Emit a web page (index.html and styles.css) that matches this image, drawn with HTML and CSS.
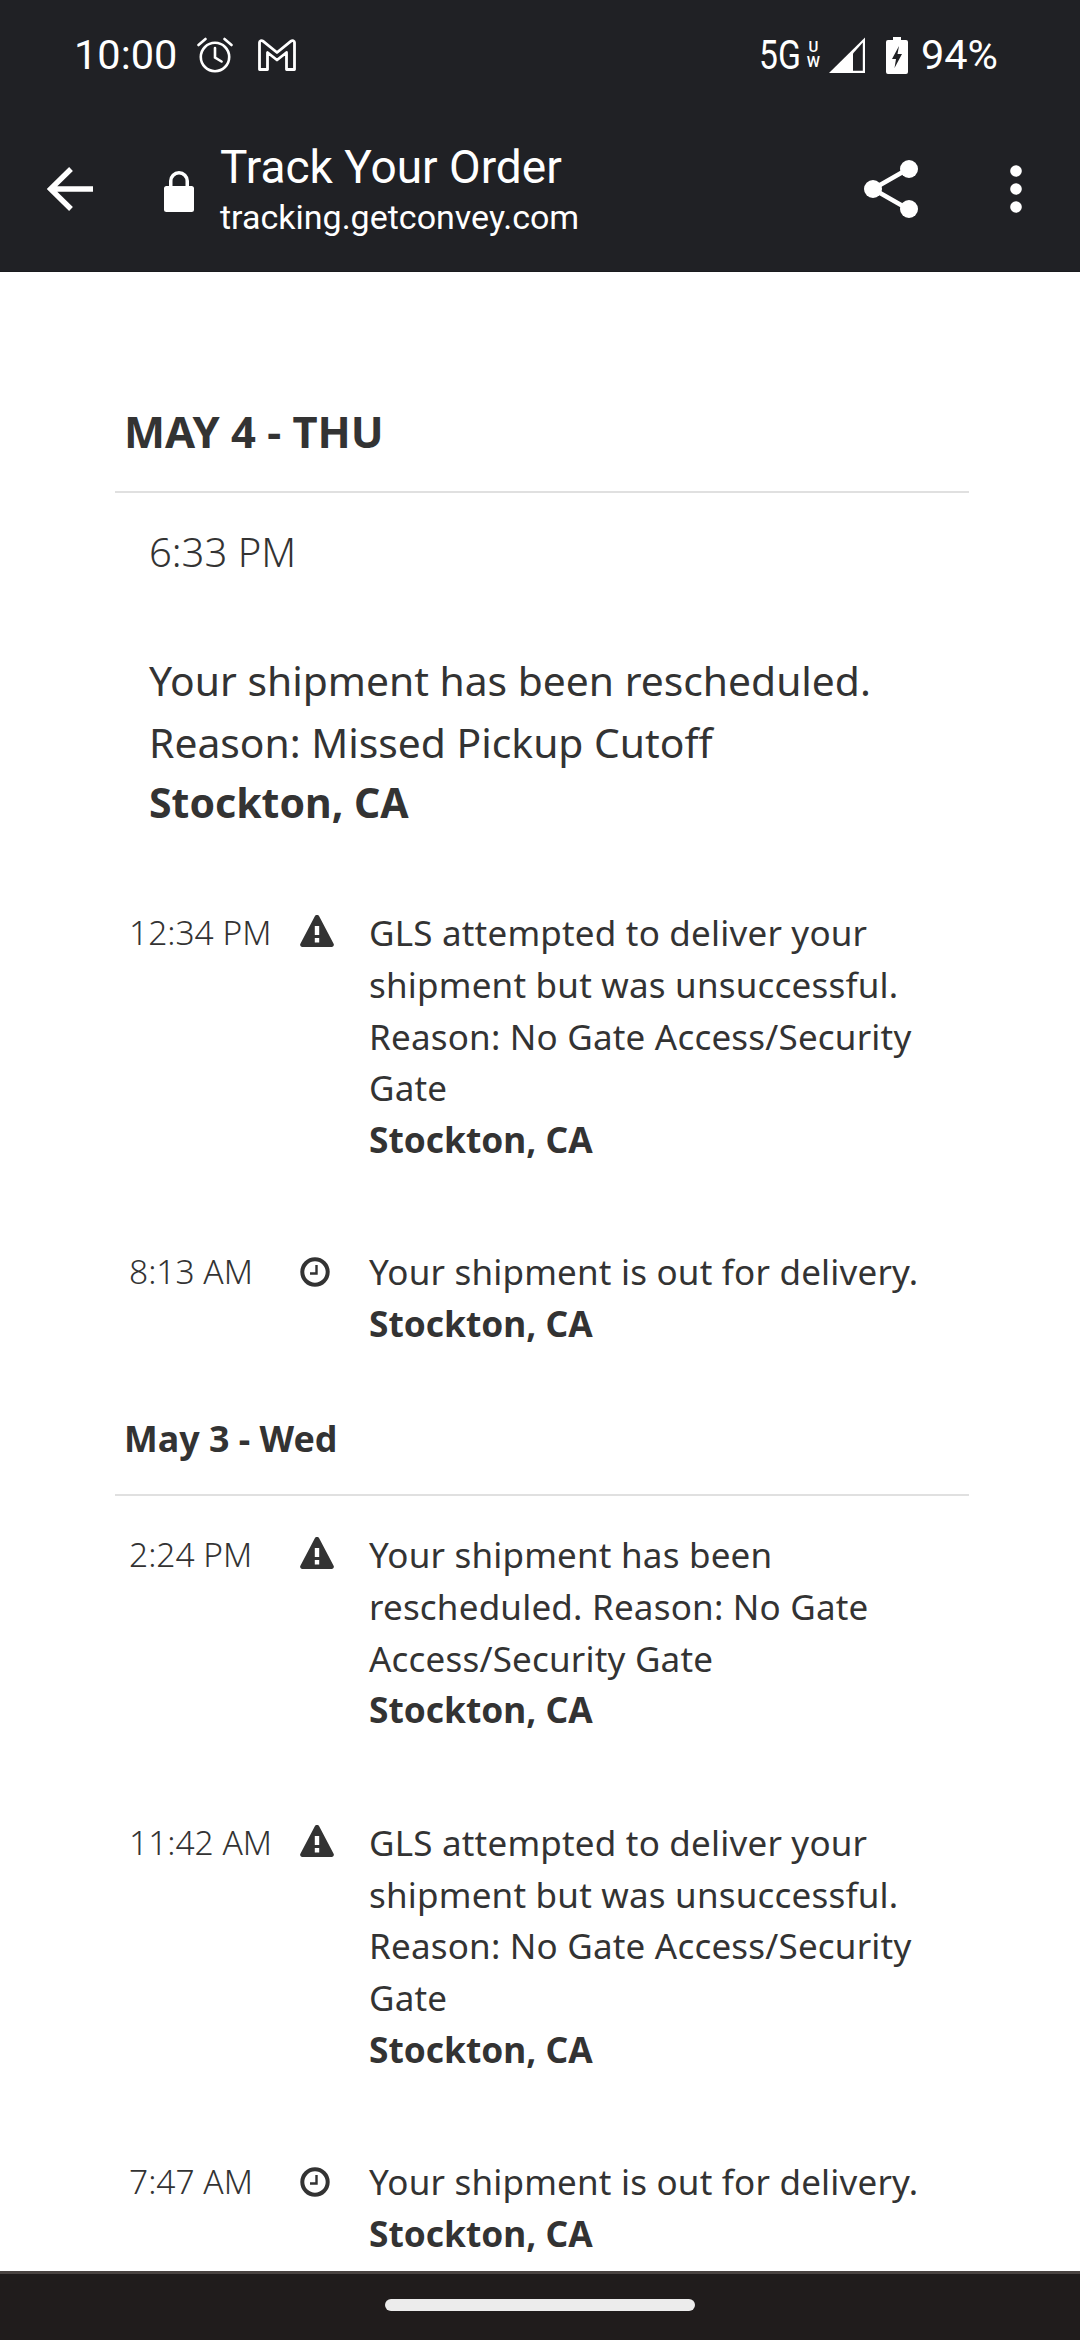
FILE: index.html
```html
<!DOCTYPE html>
<html lang="en">
<head>
<meta charset="utf-8">
<title>Track Your Order</title>
<link rel="stylesheet" href="styles.css">
</head>
<body>
<div class="phone">
  <header class="chrome">
    <div class="status">
      <div class="status-left">
        <span class="clock">10:00</span>
        <svg class="ic-alarm" viewBox="0 0 36 36" fill="none" stroke="#fff" stroke-width="2.6"><circle cx="18" cy="20" r="14.2"/><path d="M18 11v9.5l6.5 4M1.5 8 8.5 2M34.5 8l-7-6" stroke-linecap="round"/></svg>
        <svg class="ic-gmail" viewBox="0 0 38 32" fill="none" stroke="#fff" stroke-width="2.8" stroke-linejoin="round"><path d="M1.5 3.5C1.500 1.800 3.500 1 5 2.200L19 13.500 33 2.200C34.500 1 36.500 1.800 36.500 3.500V30.500H28.500V13.500L19 21 9.500 13.500V30.500H1.500Z"/></svg>
      </div>
      <div class="status-right">
        <span class="net">5G</span>
        <span class="uw"><span>U</span><span>W</span></span>
        <svg class="ic-signal" viewBox="0 0 37 36"><path d="M36 0.500V36H0Z" fill="#fff"/><path d="M24 16.500V33.800H33.800V5.500Z" fill="#202125"/></svg>
        <svg class="ic-batt" viewBox="0 0 22 37"><path d="M7 0h8v3h5a2 2 0 0 1 2 2v30a2 2 0 0 1-2 2H2a2 2 0 0 1-2-2V5a2 2 0 0 1 2-2h5Z" fill="#fff"/><path d="M13 9 6 22h4l-1.500 9L16 17h-4.500Z" fill="#202125"/></svg>
        <span class="pct">94%</span>
      </div>
    </div>
    <div class="toolbar">
      <svg class="ic-back" viewBox="0 0 46 46" fill="none" stroke="#fff" stroke-width="5.400"><path d="M46 23H4M24 3 3.500 23 24 43"/></svg>
      <svg class="ic-lock" viewBox="0 0 30 41"><path d="M15 0a10 10 0 0 1 10 10v5h2.500a2.500 2.500 0 0 1 2.500 2.500v21a2.500 2.500 0 0 1-2.500 2.500h-25A2.500 2.500 0 0 1 0 38.500v-21A2.500 2.500 0 0 1 2.500 15H5v-5A10 10 0 0 1 15 0Zm0 3.500A6.500 6.500 0 0 0 8.500 10v5h13v-5A6.500 6.500 0 0 0 15 3.500Z" fill="#fff"/></svg>
      <div class="titles">
        <div class="title">Track Your Order</div>
        <div class="url">tracking.getconvey.com</div>
      </div>
      <svg class="ic-share" viewBox="0 0 54 58"><path d="M44 9 9 29l35 20" fill="none" stroke="#fff" stroke-width="4.500"/><circle cx="45" cy="9" r="9" fill="#fff"/><circle cx="9" cy="29" r="9" fill="#fff"/><circle cx="45" cy="49" r="9" fill="#fff"/></svg>
      <svg class="ic-more" viewBox="0 0 12 48"><circle cx="6" cy="6" r="5.800" fill="#fff"/><circle cx="6" cy="24" r="5.800" fill="#fff"/><circle cx="6" cy="42" r="5.800" fill="#fff"/></svg>
    </div>
  </header>

  <main class="page">
    <h1 class="day-major">MAY 4 - THU</h1>
    <section class="latest">
      <div class="latest-time">6:33 PM</div>
      <p class="latest-msg">Your shipment has been rescheduled.<br>Reason: Missed Pickup Cutoff</p>
      <p class="latest-loc">Stockton, CA</p>
    </section>

    <article class="event">
      <div class="time">12:34 PM</div>
      <svg class="ic-warn" viewBox="0 0 34 32"><path d="M17 0c1 0 1.800.5 2.300 1.400l14.300 27.300c.8 1.500-.2 3.300-2 3.300H2.400c-1.800 0-2.800-1.800-2-3.300L14.700 1.400C15.200.5 16 0 17 0Z" fill="#333"/><path d="M14.800 11h4.400v9h-4.400ZM14.800 23h4.400v4.500h-4.400Z" fill="#fff"/></svg>
      <div class="msg">GLS attempted to deliver your shipment but was unsuccessful. Reason: No Gate Access/Security Gate<strong>Stockton, CA</strong></div>
    </article>
    <article class="event">
      <div class="time">8:13 AM</div>
      <svg class="ic-clock" viewBox="0 0 30 30" fill="none" stroke="#333"><circle cx="15" cy="15" r="12.700" stroke-width="4"/><path d="M16.500 8v8.500H10" stroke-width="2.400"/></svg>
      <div class="msg">Your shipment is out for delivery.<strong>Stockton, CA</strong></div>
    </article>

    <h2 class="day-minor">May 3 - Wed</h2>

    <article class="event first">
      <div class="time">2:24 PM</div>
      <svg class="ic-warn" viewBox="0 0 34 32"><path d="M17 0c1 0 1.800.5 2.300 1.400l14.300 27.300c.8 1.500-.2 3.300-2 3.300H2.400c-1.800 0-2.800-1.800-2-3.300L14.700 1.400C15.200.5 16 0 17 0Z" fill="#333"/><path d="M14.800 11h4.400v9h-4.400ZM14.800 23h4.400v4.500h-4.400Z" fill="#fff"/></svg>
      <div class="msg">Your shipment has been rescheduled. Reason: No Gate Access/Security Gate<strong>Stockton, CA</strong></div>
    </article>
    <article class="event">
      <div class="time">11:42 AM</div>
      <svg class="ic-warn" viewBox="0 0 34 32"><path d="M17 0c1 0 1.800.5 2.300 1.400l14.300 27.300c.8 1.500-.2 3.300-2 3.300H2.400c-1.800 0-2.800-1.800-2-3.300L14.700 1.400C15.200.5 16 0 17 0Z" fill="#333"/><path d="M14.800 11h4.400v9h-4.400ZM14.800 23h4.400v4.500h-4.400Z" fill="#fff"/></svg>
      <div class="msg">GLS attempted to deliver your shipment but was unsuccessful. Reason: No Gate Access/Security Gate<strong>Stockton, CA</strong></div>
    </article>
    <article class="event">
      <div class="time">7:47 AM</div>
      <svg class="ic-clock" viewBox="0 0 30 30" fill="none" stroke="#333"><circle cx="15" cy="15" r="12.700" stroke-width="4"/><path d="M16.500 8v8.500H10" stroke-width="2.400"/></svg>
      <div class="msg">Your shipment is out for delivery.<strong>Stockton, CA</strong></div>
    </article>
  </main>

  <footer class="navbar"><div class="handle"></div></footer>
</div>
</body>
</html>
```
FILE: styles.css
```css
* { box-sizing: border-box; }
html, body { margin: 0; padding: 0; }
body { background: #fff; font-family: "Noto Sans", "Open Sans", sans-serif; color: #333; }
svg { display: block; flex: none; }

.phone { width: 1080px; height: 2340px; display: flex; flex-direction: column; overflow: hidden; }

.chrome { height: 272px; background: #202125; color: #fff; font-family: Roboto, sans-serif; flex: none; border-bottom: 1px solid #1a1b1e; }
.status { height: 108px; padding: 36px 82px 0 74px; display: flex; justify-content: space-between; align-items: flex-start; }
.status-left, .status-right { display: flex; align-items: center; height: 38px; }
.clock { font-size: 41.5px; line-height: 38px; width: 123px; }
.ic-alarm { width: 36px; height: 36px; }
.ic-gmail { width: 38px; height: 32px; margin-left: 25px; }
.net { font-size: 41px; line-height: 38px; width: 43px; transform: scaleX(.82); transform-origin: left center; white-space: nowrap; }
.uw { display: flex; flex-direction: column; font-size: 15px; line-height: 15px; font-weight: 500; margin-left: 5px; align-items: center; }
.ic-signal { width: 37px; height: 36px; margin-left: 9px; }
.ic-batt { width: 22px; height: 37px; margin-left: 20px; }
.pct { font-size: 41.5px; line-height: 38px; margin-left: 13px; }

.toolbar { height: 161px; display: flex; align-items: center; padding: 1px 58px 0 47px; }
.ic-back { width: 46px; height: 46px; }
.ic-lock { width: 30px; height: 41px; margin-left: 71px; margin-top: 5px; }
.titles { margin-left: 26px; margin-top: 5px; flex: 1; }
.title { font-size: 46px; line-height: 52px; }
.url { font-size: 34px; line-height: 49px; }
.ic-share { width: 54px; height: 58px; margin-right: 92px; }
.ic-more { width: 12px; height: 48px; }

.page { flex: 1; min-height: 0; overflow: hidden; padding: 0 111px 0 115px; }

.day-major { margin: 0; padding: 130px 0 31px 9px; font-size: 43.5px; line-height: 58px; font-weight: 700; border-bottom: 2px solid #e0e0e0; }
.latest { padding: 30px 0 0 34px; }
.latest-time { font-size: 40px; line-height: 58px; font-weight: 300; }
.latest-msg { margin: 68px 0 0; font-size: 40.8px; line-height: 62px; }
.latest-loc { margin: 0; font-size: 41px; line-height: 59px; font-weight: 700; }

.event { display: grid; grid-template-columns: 171px 69px 1fr; padding: 75px 33px 0 14px; }
.event + .event { padding-top: 80.5px; }
.event.first { padding-top: 33px; }
.time { font-size: 33.5px; line-height: 51.8px; font-weight: 300; }
.msg { font-size: 35px; line-height: 51.8px; letter-spacing: .2px; }
.msg strong { display: block; font-weight: 700; font-size: 35.3px; letter-spacing: 0; }
.ic-warn { width: 34px; height: 32px; margin-top: 8px; }
.ic-clock { width: 30px; height: 30px; margin-top: 11px; }

.day-minor { margin: 0; padding: 63px 0 31px 9px; font-size: 35.8px; line-height: 50px; font-weight: 700; border-bottom: 2px solid #e0e0e0; }

.navbar { height: 69px; flex: none; background: #201c1c; border-top: 3px solid #4a4442; display: flex; justify-content: center; padding-top: 25px; }
.handle { width: 310px; height: 12px; border-radius: 6px; background: #ececec; }
```
